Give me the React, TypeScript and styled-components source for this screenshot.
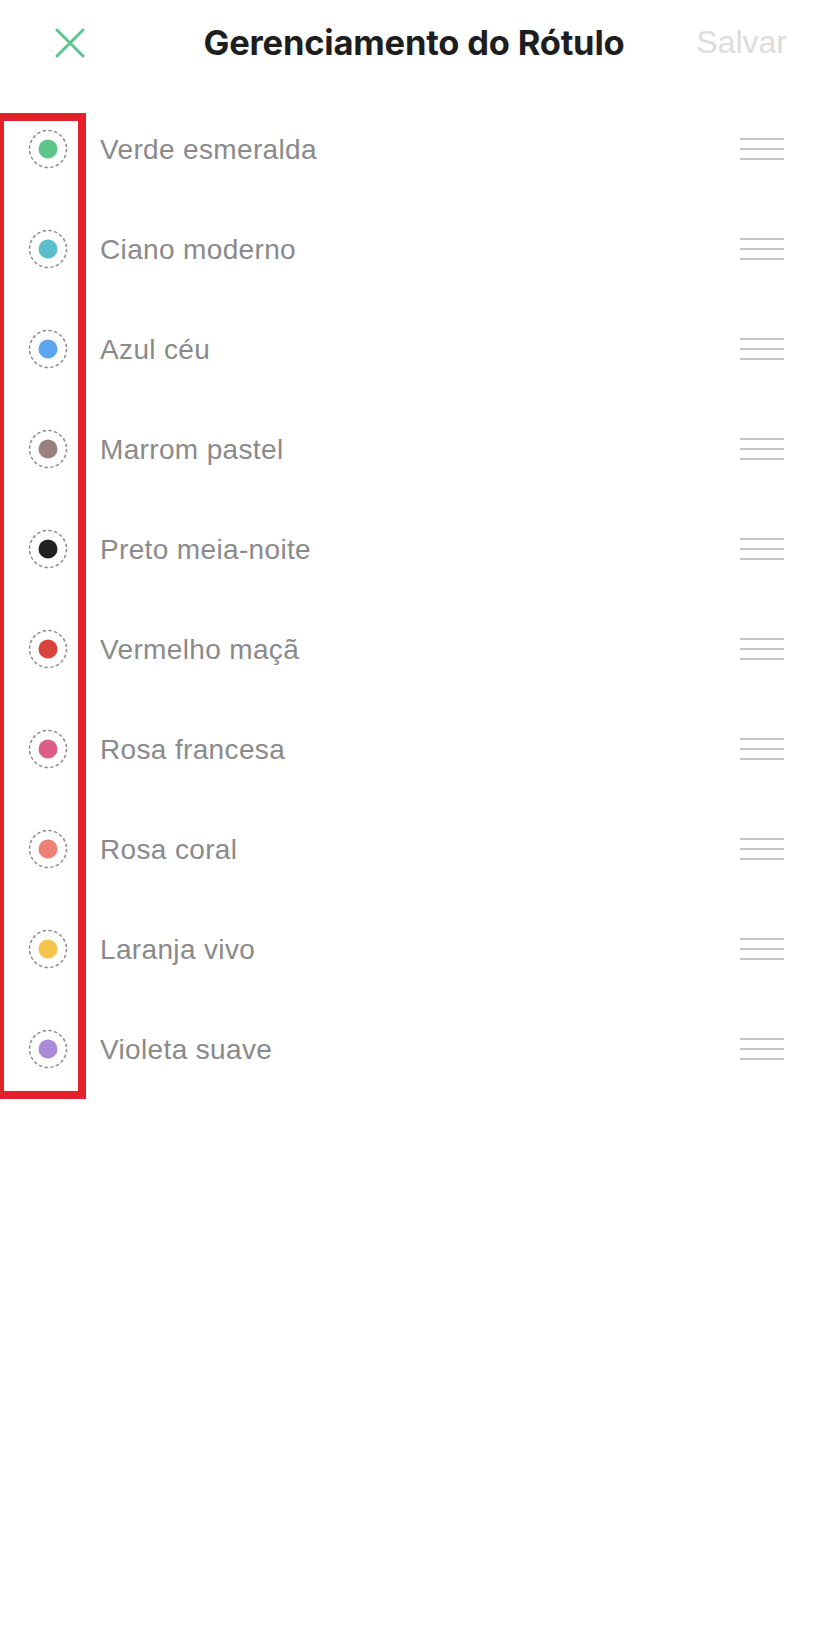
import styled, { createGlobalStyle } from "styled-components";

const GlobalStyle = createGlobalStyle`
  html, body {
    margin: 0;
    padding: 0;
    background: #ffffff;
  }
  body {
    font-family: "Liberation Sans", Arial, sans-serif;
  }
`;

const labels = [
  { name: "Verde esmeralda", color: "#5ec58a" },
  { name: "Ciano moderno", color: "#5bbdc9" },
  { name: "Azul céu", color: "#5aa5ee" },
  { name: "Marrom pastel", color: "#9a807e" },
  { name: "Preto meia-noite", color: "#222222" },
  { name: "Vermelho maçã", color: "#d8443d" },
  { name: "Rosa francesa", color: "#dc5e88" },
  { name: "Rosa coral", color: "#ee7f74" },
  { name: "Laranja vivo", color: "#f5c24b" },
  { name: "Violeta suave", color: "#a88ad9" },
];

const CloseIcon = () => (
  <svg width="30" height="30" viewBox="0 0 30 30">
    <path
      d="M2 2 L28 28 M28 2 L2 28"
      stroke="#5cc58c"
      strokeWidth="3"
      strokeLinecap="round"
      fill="none"
    />
  </svg>
);

const Swatch = ({ color }: { color: string }) => (
  <svg width="40" height="40" viewBox="0 0 40 40">
    <circle
      cx="20"
      cy="20"
      r="18.5"
      fill="none"
      stroke="#8c8c8c"
      strokeWidth="1.5"
      strokeDasharray="3.4 2.4"
    />
    <circle cx="20" cy="20" r="9.5" fill={color} />
  </svg>
);

const App = () => {
  return (
    <Page>
      <GlobalStyle />
      <Header>
        <CloseButton>
          <CloseIcon />
        </CloseButton>
        <Title>Gerenciamento do Rótulo</Title>
        <SaveButton>Salvar</SaveButton>
      </Header>
      <List>
        {labels.map((label) => (
          <Row key={label.name}>
            <SwatchCell>
              <Swatch color={label.color} />
            </SwatchCell>
            <Name>{label.name}</Name>
            <Handle>
              <span />
              <span />
              <span />
            </Handle>
          </Row>
        ))}
        <Highlight />
      </List>
    </Page>
  );
};

export default App;

const Page = styled.div`
  width: 828px;
  min-height: 1626px;
  background: #ffffff;
`;

const Header = styled.div`
  position: relative;
  display: flex;
  align-items: center;
  justify-content: space-between;
  height: 84px;
  padding: 0 41px 0 55px;
`;

const CloseButton = styled.div`
  display: flex;
  align-items: center;
  width: 32px;
  height: 32px;
  margin-top: 1px;
`;

const Title = styled.div`
  position: absolute;
  left: 0;
  right: 0;
  text-align: center;
  font-family: Inter, "Liberation Sans", sans-serif;
  font-weight: 700;
  font-size: 34.5px;
  letter-spacing: -0.2px;
  color: #1e1e1e;
  pointer-events: none;
`;

const SaveButton = styled.div`
  font-size: 32px;
  color: #dcdcdc;
`;

const List = styled.div`
  position: relative;
  margin-top: 15px;
`;

const Row = styled.div`
  display: flex;
  align-items: center;
  height: 100px;
  padding: 0 44px 0 28px;
`;

const SwatchCell = styled.div`
  display: flex;
  width: 40px;
  height: 40px;
  margin-right: 32px;
`;

const Name = styled.div`
  flex: 1;
  font-size: 28px;
  letter-spacing: 0.35px;
  color: #8a8a8a;
  margin-top: 2px;
`;

const Handle = styled.div`
  display: flex;
  flex-direction: column;
  gap: 7.6px;
  width: 44px;

  span {
    display: block;
    height: 2px;
    background: #c6c6c6;
  }
`;

const Highlight = styled.div`
  position: absolute;
  left: 0;
  top: 14px;
  width: 74px;
  height: 970px;
  border: 8px solid #e5202a;
  border-left-width: 4px;
  pointer-events: none;
`;
